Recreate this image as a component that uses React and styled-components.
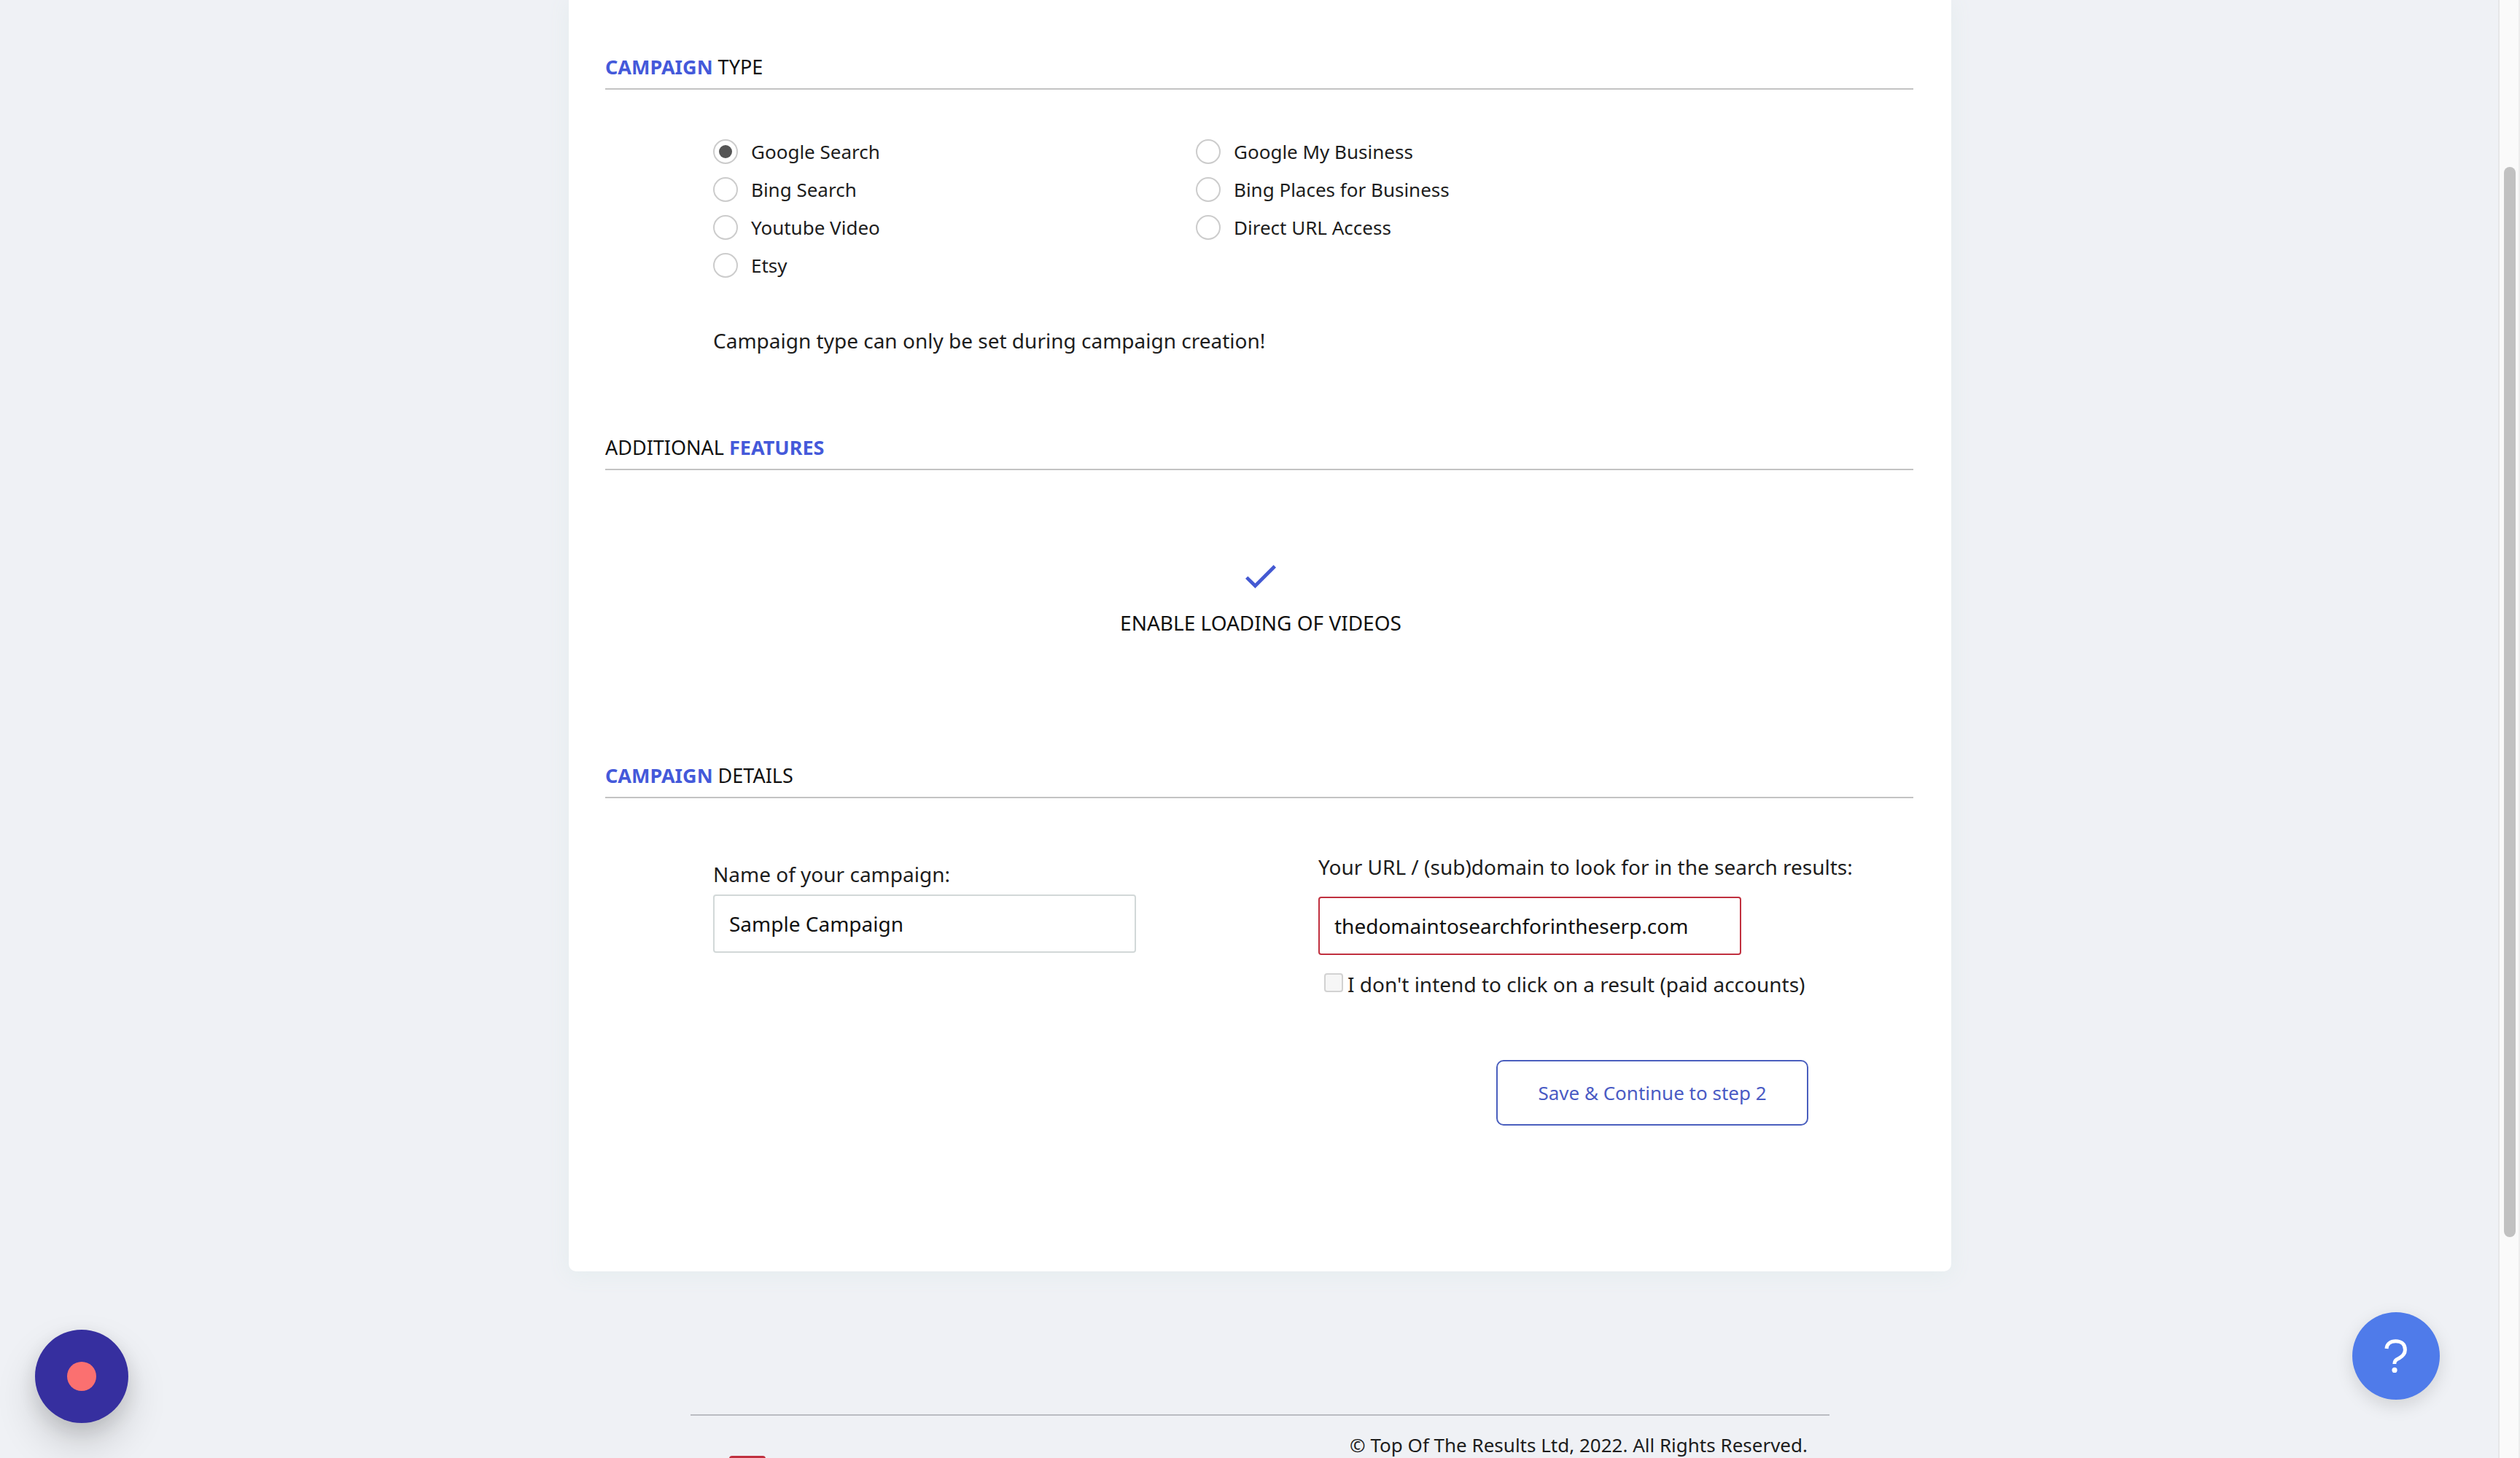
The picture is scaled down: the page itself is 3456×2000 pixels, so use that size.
import React, { useState } from "react";
import styled, { createGlobalStyle } from "styled-components";

const GlobalStyle = createGlobalStyle`
  *, *::before, *::after { box-sizing: border-box; }
  body {
    margin: 0;
    background: #eff1f5;
    color: #1d1d1d;
    font: 400 28px/40px "Noto Sans", "Open Sans", sans-serif;
  }
  input, button { font: inherit; color: inherit; }
`;

const Page = styled.div`
  height: 100vh;
  overflow: hidden;
`;

const Card = styled.main`
  max-width: 1896px;
  margin: 0 auto;
  padding: 72px 52px 200px 50px;
  background: #fff;
  border-radius: 0 0 10px 10px;
  box-shadow: 0 4px 28px 2px #e5edef;
`;

const SectionTitle = styled.h2`
  margin: 0;
  padding-bottom: 9px;
  border-bottom: 2px solid #c3c3c3;
  color: #111;
  font-size: 27px;
  font-weight: 400;
  line-height: 40px;
`;

const Accent = styled.b`
  color: #4459da;
  font-weight: 700;
`;

const SectionBody = styled.div`
  padding: ${(p) => p.$top}px 144px ${(p) => p.$bottom}px 148px;
`;

const RadioGrid = styled.div`
  display: grid;
  grid-template-columns: 662px 1fr;
  align-items: start;
`;

const RadioLabel = styled.label`
  display: flex;
  align-items: center;
  gap: 18px;
  height: 52px;
  font-size: 26px;
`;

const Radio = styled.input`
  appearance: none;
  display: grid;
  place-items: center;
  width: 34px;
  height: 34px;
  margin: 0;
  background: #fff;
  border: 2px solid #ccc;
  border-radius: 50%;

  &:checked::after {
    content: "";
    width: 18px;
    height: 18px;
    border-radius: 50%;
    background: #555;
  }
`;

const Note = styled.p`
  margin: 57px 0 0;
`;

const Feature = styled.div`
  display: flex;
  flex-direction: column;
  align-items: center;
  gap: 27px;
  color: #111;
`;

const CheckMark = styled.svg`
  width: 42px;
  height: 32px;
  fill: #4459d2;
`;

const FieldGrid = styled.div`
  display: grid;
  grid-template-columns: 830px 1fr;
`;

const Field = styled.div`
  display: flex;
  flex-direction: column;
  align-items: flex-start;
  gap: ${(p) => p.$gap}px;
  padding-top: ${(p) => p.$top}px;
  white-space: nowrap;
`;

const TextInput = styled.input`
  width: 580px;
  height: 80px;
  padding: 0 20px;
  background: #fff;
  border: 2px solid ${(p) => (p.$invalid ? "#c0303f" : "#d2d8d8")};
  border-radius: 4px;
  color: #111;
  outline: none;
`;

const CheckLabel = styled.label`
  display: flex;
  align-items: center;
  gap: 6px;
  padding-left: 8px;
  line-height: 38px;
`;

const Checkbox = styled.input`
  appearance: none;
  width: 26px;
  height: 26px;
  margin: 0 0 4px;
  background: #f6f6f6;
  border: 2px solid #d2d2d2;
  border-radius: 4px;
`;

const Actions = styled.div`
  display: flex;
  justify-content: flex-end;
  padding-top: 85px;
`;

const SaveButton = styled.button`
  width: 428px;
  height: 90px;
  background: #fff;
  border: 2px solid #4a5fbe;
  border-radius: 10px;
  color: #4a5bc4;
  font-size: 26px;
`;

const Footer = styled.footer`
  max-width: 1562px;
  margin: 196px auto 0;
  padding: 20px 30px;
  border-top: 2px solid #babcc2;
  display: flex;
  justify-content: space-between;
  font-size: 26px;
`;

const Logo = styled.svg`
  width: 50px;
  height: 50px;
  margin: 35px 0 0 23px;
`;

const RoundButton = styled.button`
  position: fixed;
  display: grid;
  place-items: center;
  padding: 0;
  border: 0;
  border-radius: 50%;
`;

const RecordButton = styled(RoundButton)`
  left: 48px;
  bottom: 48px;
  width: 128px;
  height: 128px;
  background: #362f9f;
  box-shadow: 0 28px 56px rgba(0, 0, 0, 0.16), 0 10px 30px rgba(0, 0, 0, 0.12);

  &::after {
    content: "";
    width: 40px;
    height: 40px;
    border-radius: 50%;
    background: #fb7070;
  }
`;

const HelpButton = styled(RoundButton)`
  right: 110px;
  bottom: 80px;
  width: 120px;
  height: 120px;
  background: #4f7bea;
  box-shadow: 0 8px 24px rgba(0, 0, 0, 0.13);
`;

const HelpMark = styled.svg`
  width: 32px;
  height: 46px;
`;

const ScrollTrack = styled.div`
  position: fixed;
  top: 0;
  right: 0;
  bottom: 0;
  width: 30px;
  padding: 229px 4px 303px 6px;
  background: #fafafa;
  border-left: 2px solid #e6e6e8;
  border-right: 2px solid #ededed;
`;

const ScrollThumb = styled.div`
  width: 16px;
  height: 100%;
  border-radius: 8px;
  background: #c1c1c1;
`;

const campaignTypes = [
  ["Google Search", "Bing Search", "Youtube Video", "Etsy"],
  ["Google My Business", "Bing Places for Business", "Direct URL Access"],
];

export default function App() {
  const [type, setType] = useState("Google Search");

  return (
    <Page>
      <GlobalStyle />
      <Card>
        <section>
          <SectionTitle>
            <Accent>CAMPAIGN</Accent> TYPE
          </SectionTitle>
          <SectionBody $top={59} $bottom={107}>
            <RadioGrid>
              {campaignTypes.map((column) => (
                <div key={column[0]}>
                  {column.map((name) => (
                    <RadioLabel key={name}>
                      <Radio
                        type="radio"
                        name="campaign-type"
                        checked={type === name}
                        onChange={() => setType(name)}
                      />
                      {name}
                    </RadioLabel>
                  ))}
                </div>
              ))}
            </RadioGrid>
            <Note>Campaign type can only be set during campaign creation!</Note>
          </SectionBody>
        </section>

        <section>
          <SectionTitle>
            ADDITIONAL <Accent>FEATURES</Accent>
          </SectionTitle>
          <SectionBody $top={130} $bottom={170}>
            <Feature>
              <CheckMark viewBox="0 0 42 32" aria-hidden="true">
                <path d="M3.4 15.4 L13.4 25.2 L38.6 0 L42 3.6 L13.4 32 L0 18.8 Z" />
              </CheckMark>
              ENABLE LOADING OF VIDEOS
            </Feature>
          </SectionBody>
        </section>

        <section>
          <SectionTitle>
            <Accent>CAMPAIGN</Accent> DETAILS
          </SectionTitle>
          <SectionBody $top={74} $bottom={0}>
            <FieldGrid>
              <Field $top={10} $gap={8}>
                <label htmlFor="campaign-name">Name of your campaign:</label>
                <TextInput id="campaign-name" type="text" defaultValue="Sample Campaign" />
              </Field>
              <Field $top={0} $gap={21}>
                <label htmlFor="domain">
                  Your URL / (sub)domain to look for in the search results:
                </label>
                <TextInput
                  id="domain"
                  type="text"
                  $invalid
                  defaultValue="thedomaintosearchforintheserp.com"
                />
                <CheckLabel>
                  <Checkbox type="checkbox" />
                  I don't intend to click on a result (paid accounts)
                </CheckLabel>
              </Field>
            </FieldGrid>
            <Actions>
              <SaveButton type="button">Save &amp; Continue to step 2</SaveButton>
            </Actions>
          </SectionBody>
        </section>
      </Card>

      <Footer>
        <Logo viewBox="0 0 50 50" aria-hidden="true">
          <rect width="50" height="50" rx="4" fill="#c0303f" />
        </Logo>
        <span>© Top Of The Results Ltd, 2022. All Rights Reserved.</span>
      </Footer>

      <RecordButton type="button" aria-label="Record" />
      <HelpButton type="button" aria-label="Help">
        <HelpMark viewBox="0 0 32 46" aria-hidden="true">
          <path
            d="M3 13 C3.4 6.5 8.5 2.8 15.5 2.8 C23 2.8 28.4 6.8 28.4 14.5 C28.4 20.5 25 23.4 20.4 26 C15.6 28.4 13.8 29.4 13.8 34"
            fill="none"
            stroke="#fff"
            strokeWidth="5"
          />
          <circle cx="14" cy="42.4" r="3.6" fill="#fff" />
        </HelpMark>
      </HelpButton>
      <ScrollTrack aria-hidden="true">
        <ScrollThumb />
      </ScrollTrack>
    </Page>
  );
}
